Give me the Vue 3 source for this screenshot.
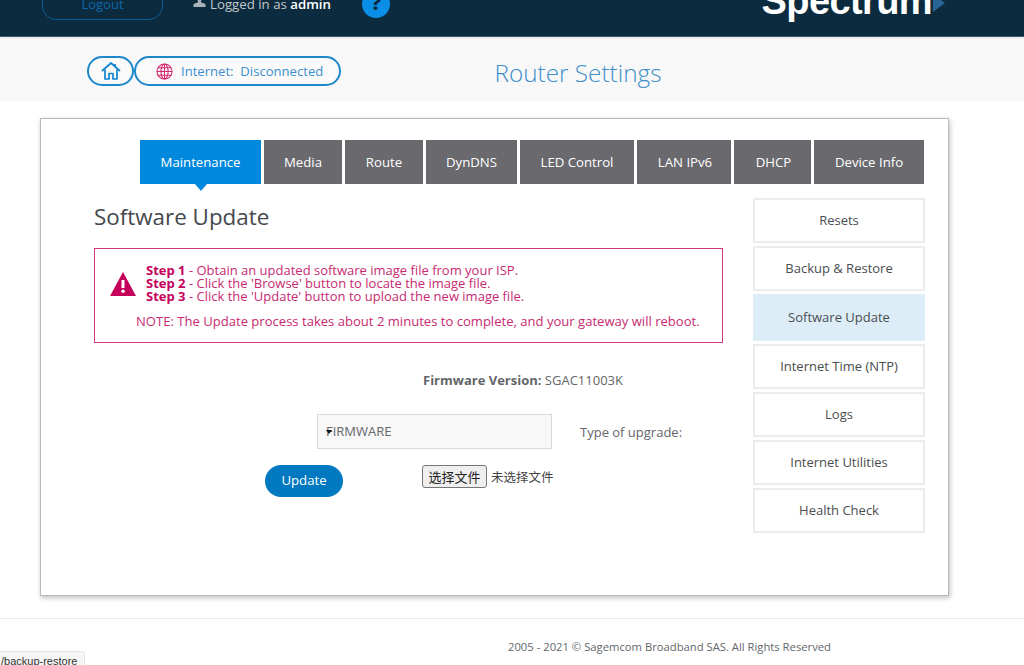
<script setup>
const tabs = ['Maintenance', 'Media', 'Route', 'DynDNS', 'LED Control', 'LAN IPv6', 'DHCP', 'Device Info']
const side = ['Resets', 'Backup & Restore', 'Software Update', 'Internet Time (NTP)', 'Logs', 'Internet Utilities', 'Health Check']
</script>

<template>
  <div class="page">
    <header class="top">
      <a class="logout">Logout</a>
      <div class="user">
        <svg class="user-icon" viewBox="0 0 12 12" width="13" height="12"><path d="M3.500 0h5v4.500L7.500 6v1.200L12 9v3H0V9l4.500-1.800V6l-1-1.500z" fill="#a9b2b8"/></svg>
        <span>Logged in as <b>admin</b></span>
      </div>
      <div class="help">?</div>
      <div class="logo">
        <span>Spectrum</span>
        <svg viewBox="0 0 12 18" width="12" height="18"><path d="M0 0l12 9-12 9z" fill="#2a6496"/></svg>
      </div>
    </header>

    <section class="sub">
      <div class="pills">
        <div class="pill home">
          <svg viewBox="0 0 20 20" width="20" height="20" fill="none" stroke="#0e85d0" stroke-width="1.700" stroke-linejoin="round">
            <path d="M1 10L10 2l9 8"/>
            <path d="M4 8.500V18h4v-5.500h4V18h4V8.500"/>
            <path d="M14 3v2.500"/>
          </svg>
        </div>
        <div class="pill net">
          <svg viewBox="0 0 18 18" width="17" height="17" fill="none" stroke="#d4256e" stroke-width="1.100">
            <circle cx="9" cy="9" r="8"/>
            <ellipse cx="9" cy="9" rx="3.800" ry="8"/>
            <path d="M9 1v16M1 9h16M2 5h14M2 13h14"/>
          </svg>
          <span class="net-text">Internet:&nbsp; Disconnected</span>
        </div>
      </div>
      <h1>Router Settings</h1>
    </section>

    <main class="card">
      <nav class="tabs">
        <div v-for="(t, i) in tabs" :key="t" class="tab" :class="{ active: i === 0 }">{{ t }}</div>
      </nav>
      <div class="body">
        <div class="content">
          <h2>Software Update</h2>
          <div class="alert">
            <div class="steps">
              <svg class="warn" viewBox="0 0 26 24" width="26" height="24">
                <path d="M13 0l13 24H0z" fill="#c4005a"/>
                <rect x="11.500" y="8" width="3" height="8" fill="#fff"/>
                <circle cx="13" cy="19.300" r="1.800" fill="#fff"/>
              </svg>
              <div class="lines">
                <div><b>Step 1</b> - Obtain an updated software image file from your ISP.</div>
                <div><b>Step 2</b> - Click the 'Browse' button to locate the image file.</div>
                <div><b>Step 3</b> - Click the 'Update' button to upload the new image file.</div>
              </div>
            </div>
            <p class="note">NOTE: The Update process takes about 2 minutes to complete, and your gateway will reboot.</p>
          </div>
          <div class="version"><b>Firmware Version:</b> SGAC11003K</div>
          <div class="upgrade">
            <div class="select">FIRMWARE</div>
            <span class="type">Type of upgrade:</span>
          </div>
          <div class="actions">
            <button class="update">Update</button>
            <div class="file">
              <button class="pick">选择文件</button>
              <span>未选择文件</span>
            </div>
          </div>
        </div>
        <aside class="side">
          <div v-for="(s, i) in side" :key="s" class="side-item" :class="{ on: i === 2 }">{{ s }}</div>
        </aside>
      </div>
    </main>

    <footer class="foot">2005 - 2021 © Sagemcom Broadband SAS. All Rights Reserved</footer>
    <div class="status">/backup-restore</div>
  </div>
</template>

<style>
html, body { margin: 0; background: #fff; overflow: hidden; }
</style>

<style scoped>
.page {
  position: relative;
  width: 1024px;
  height: 665px;
  overflow: hidden;
  font-family: "Open Sans", "Noto Sans CJK SC", sans-serif;
  color: #63666a;
  font-size: 14px;
}
.top {
  height: 36px;
  background: #0d2b3e;
  border-bottom: 1px solid #3f5b6b;
  display: flex;
  align-items: flex-end;
  overflow: hidden;
  padding-left: 42px;
}
.logout {
  width: 121px;
  height: 40px;
  flex: none;
  margin-bottom: 16px;
  border: 1px solid #0b5c95;
  border-radius: 14px;
  color: #0c68ab;
  display: flex;
  align-items: flex-end;
  justify-content: center;
  font-size: 13px;
  line-height: 18px;
  padding-bottom: 6px;
  box-sizing: border-box;
}
.user {
  display: flex;
  align-items: center;
  gap: 4px;
  margin-left: 30px;
  margin-bottom: 23px;
  color: #c4c8cb;
  font-size: 13.250px;
  line-height: 18px;
}
.user b { color: #fff; font-weight: 600; }
.user-icon { margin-bottom: 6px; }
.help {
  width: 28px;
  height: 28px;
  margin-left: 31px;
  margin-bottom: 18px;
  border-radius: 50%;
  background: #0b8fe6;
  color: #0d2b3e;
  font-weight: 800;
  font-size: 20px;
  line-height: 25px;
  text-align: center;
  flex: none;
}
.logo {
  margin-left: auto;
  margin-right: 79px;
  margin-bottom: 16px;
  display: flex;
  align-items: flex-end;
  color: #fff;
  font-family: "Liberation Sans", sans-serif;
  font-weight: 700;
  font-size: 38px;
  line-height: 38px;
  letter-spacing: -0.600px;
}
.logo svg { margin-bottom: 8px; margin-left: 1px; }
.sub {
  height: 65px;
  background: #f8f8f8;
  box-shadow: inset 0 3px 3px -2px #e4e4e4;
  position: relative;
  display: flex;
  align-items: center;
  justify-content: center;
  box-sizing: border-box;
}
.pills {
  position: absolute;
  left: 87px;
  top: 19px;
  display: flex;
}
.pill {
  height: 30px;
  border: 2px solid #1c87c9;
  border-radius: 15px;
  box-sizing: border-box;
  display: flex;
  align-items: center;
  background: #fafafa;
}
.home { width: 47px; justify-content: center; }
.net { width: 207px; padding-left: 20px; gap: 8px; }
.net-text { color: #3b8fd0; font-size: 13.100px; line-height: 18px; white-space: nowrap; }
h1 {
  margin: 6px 0 0 132px;
  font-size: 24.300px;
  font-weight: 300;
  color: #3d8ec9;
  line-height: 34px;
}
.card {
  margin: 16px 0 0 40px;
  width: 909px;
  height: 478px;
  box-sizing: border-box;
  border: 1px solid #b9b9b9;
  box-shadow: 1px 2px 5px rgba(0, 0, 0, 0.25);
  padding: 21px 23px 0 53px;
  background: #fff;
}
.tabs {
  display: grid;
  grid-template-columns: 121px 78px 78px 91px 114px 94px 77px 110px;
  gap: 3px;
  margin-left: 46px;
  height: 44px;
}
.tab {
  background: #6a696e;
  color: #fff;
  font-size: 13.200px;
  line-height: 44px;
  text-align: center;
  position: relative;
  white-space: nowrap;
}
.tab:nth-child(6), .tab:nth-child(7) { padding-left: 2px; }
.tab.active { background: #0088dd; }
.tab.active::after {
  content: "";
  position: absolute;
  left: 50%;
  bottom: -7px;
  margin-left: -6px;
  border-left: 6px solid transparent;
  border-right: 6px solid transparent;
  border-top: 7px solid #0088dd;
}
.body {
  display: flex;
  justify-content: space-between;
  margin-top: 14px;
}
.content { width: 629px; }
h2 {
  margin: 4px 0 16px;
  font-size: 22.400px;
  font-weight: 400;
  line-height: 30px;
  color: #45484c;
}
.alert {
  height: 95px;
  box-sizing: border-box;
  border: 1px solid #d1397c;
  color: #c72a72;
  padding-top: 15px;
  font-size: 13px;
}
.steps {
  display: flex;
  align-items: center;
  padding-left: 15px;
}
.warn { flex: none; margin-right: 10px; margin-top: 1px; }
.lines { line-height: 13px; }
.lines b { color: #c4005a; font-weight: 700; }
.note {
  margin: 9px 0 0 41px;
  font-size: 13.070px;
  line-height: 18px;
  white-space: nowrap;
}
.version {
  margin-top: 28px;
  margin-left: 329px;
  font-size: 13px;
  line-height: 18px;
}
.version b { font-weight: 700; }
.upgrade {
  display: flex;
  align-items: center;
  margin-top: 25px;
  margin-left: 223px;
}
.select {
  position: relative;
  width: 235px;
  height: 35px;
  box-sizing: border-box;
  background: #f8f8f8;
  border: 1px solid #d9d9d9;
  padding-left: 8px;
  line-height: 33px;
  font-size: 13px;
}
.select::before {
  content: "";
  position: absolute;
  left: 8px;
  top: 15px;
  border-left: 3px solid transparent;
  border-right: 3px solid transparent;
  border-top: 4px solid #111;
}
.type { margin-left: 28px; font-size: 13px; }
.actions {
  display: flex;
  align-items: flex-start;
  margin-top: 16px;
  margin-left: 171px;
}
.update {
  width: 78px;
  height: 32px;
  border: none;
  border-radius: 16px;
  background: #0079c1;
  color: #fff;
  font: 400 13.200px "Open Sans", sans-serif;
  padding: 0 0 2px;
  box-sizing: border-box;
}
.file {
  margin-left: 79px;
  margin-top: -1px;
  display: flex;
  align-items: center;
  gap: 4px;
  font-family: "Noto Sans CJK SC", sans-serif;
  font-size: 12.500px;
  color: #444;
  height: 24px;
}
.pick {
  width: 65px;
  height: 23px;
  padding: 0;
  background: #efefef;
  border: 1px solid #767676;
  border-radius: 3px;
  font: 400 13px "Noto Sans CJK SC", sans-serif;
  color: #222;
}
.side {
  width: 172px;
  display: flex;
  flex-direction: column;
}
.side-item {
  height: 45px;
  box-sizing: border-box;
  border: 2px solid #ececec;
  text-align: center;
  line-height: 41px;
  font-size: 13px;
  color: #4a4d50;
  margin-bottom: 3px;
}
.side-item.on { background: #dcedf7; border-color: #dcedf7; height: 47px; line-height: 43px; }
.foot {
  margin-top: 22px;
  border-top: 1px solid #e8e8e8;
  padding-top: 20px;
  padding-left: 508px;
  font-size: 11.250px;
  line-height: 16px;
  color: #63666a;
}
.status {
  position: absolute;
  left: -4px;
  bottom: -10px;
  height: 22px;
  padding: 0 7px 0 4px;
  background: #f6f6f6;
  border: 1px solid #e6e6e6;
  border-radius: 3px;
  font-family: "Liberation Sans", sans-serif;
  font-size: 11px;
  line-height: 18px;
  color: #333;
}
</style>
